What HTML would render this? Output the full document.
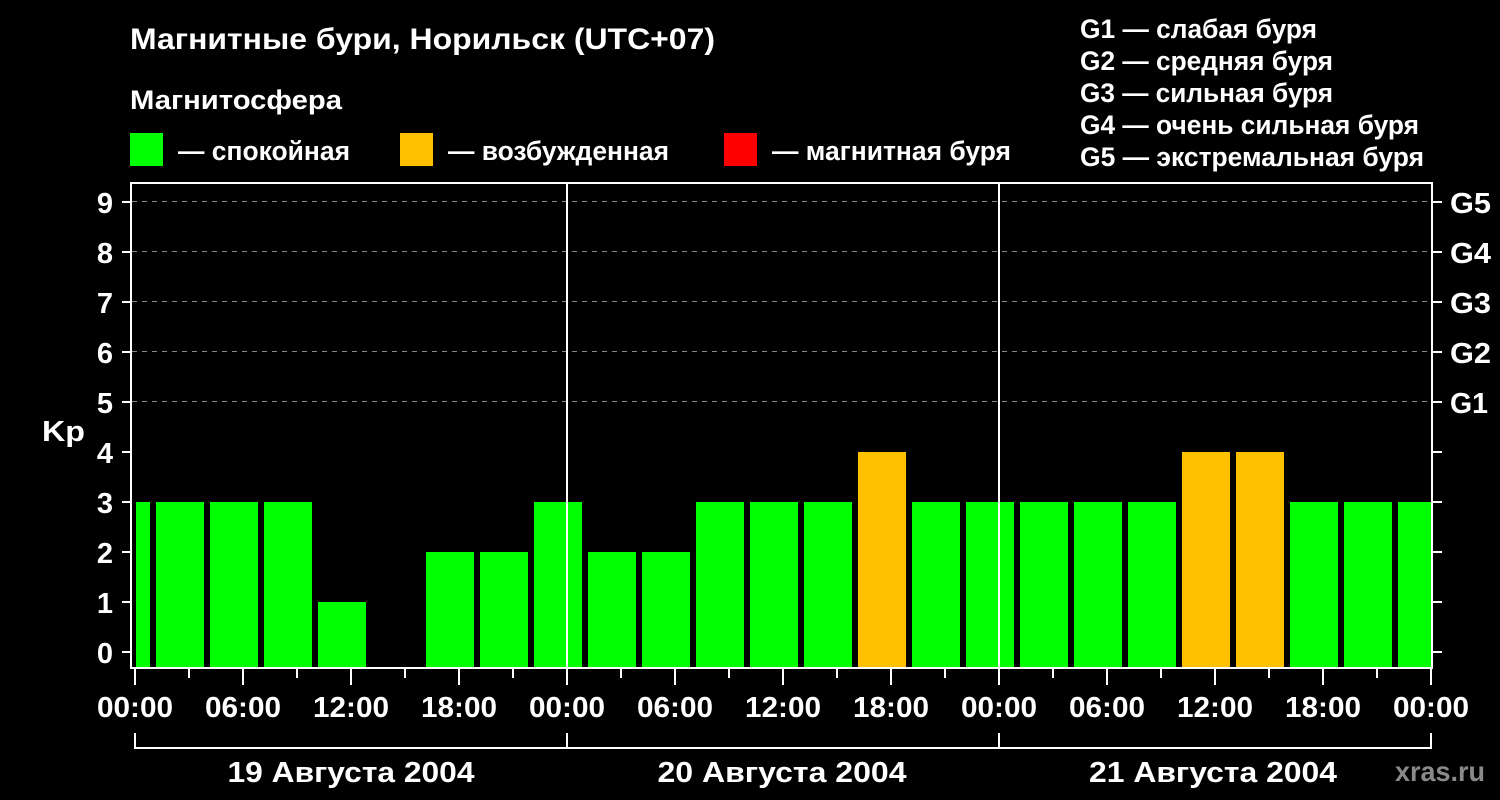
<!DOCTYPE html>
<html><head><meta charset="utf-8"><style>
html,body{margin:0;padding:0;background:#000;}
svg{display:block;}
text{font-family:"Liberation Sans",Arial,sans-serif;font-weight:bold;fill:#fff;}
</style></head><body>
<svg width="1500" height="800" viewBox="0 0 1500 800" xmlns="http://www.w3.org/2000/svg">
<rect width="1500" height="800" fill="#000"/>
<text x="130" y="49" font-size="30" textLength="585" lengthAdjust="spacingAndGlyphs">Магнитные бури, Норильск (UTC+07)</text>
<text x="130" y="109" font-size="27" textLength="212" lengthAdjust="spacingAndGlyphs">Магнитосфера</text>
<rect x="130" y="133" width="33" height="33" fill="#00ff00"/>
<text x="178" y="160" font-size="27" textLength="172" lengthAdjust="spacingAndGlyphs">— спокойная</text>
<rect x="400" y="133" width="33" height="33" fill="#ffc000"/>
<text x="448" y="160" font-size="27" textLength="221" lengthAdjust="spacingAndGlyphs">— возбужденная</text>
<rect x="724" y="133" width="33" height="33" fill="#ff0000"/>
<text x="772" y="160" font-size="27" textLength="239" lengthAdjust="spacingAndGlyphs">— магнитная буря</text>
<g font-size="27">
<text x="1080" y="38" textLength="237" lengthAdjust="spacingAndGlyphs">G1 — слабая буря</text>
<text x="1080" y="70" textLength="253" lengthAdjust="spacingAndGlyphs">G2 — средняя буря</text>
<text x="1080" y="102" textLength="253" lengthAdjust="spacingAndGlyphs">G3 — сильная буря</text>
<text x="1080" y="134" textLength="339" lengthAdjust="spacingAndGlyphs">G4 — очень сильная буря</text>
<text x="1080" y="166" textLength="344" lengthAdjust="spacingAndGlyphs">G5 — экстремальная буря</text>
</g>
<g stroke="#888" stroke-width="1" stroke-dasharray="5,5">
<line x1="132" y1="201.5" x2="1432" y2="201.5"/>
<line x1="132" y1="251.5" x2="1432" y2="251.5"/>
<line x1="132" y1="301.5" x2="1432" y2="301.5"/>
<line x1="132" y1="351.5" x2="1432" y2="351.5"/>
<line x1="132" y1="401.5" x2="1432" y2="401.5"/>
</g>
<g fill="#00ff00">
<rect x="136" y="502" width="14" height="166"/>
<rect x="156" y="502" width="48" height="166"/>
<rect x="210" y="502" width="48" height="166"/>
<rect x="264" y="502" width="48" height="166"/>
<rect x="318" y="602" width="48" height="66"/>
<rect x="426" y="552" width="48" height="116"/>
<rect x="480" y="552" width="48" height="116"/>
<rect x="534" y="502" width="48" height="166"/>
<rect x="588" y="552" width="48" height="116"/>
<rect x="642" y="552" width="48" height="116"/>
<rect x="696" y="502" width="48" height="166"/>
<rect x="750" y="502" width="48" height="166"/>
<rect x="804" y="502" width="48" height="166"/>
<rect x="912" y="502" width="48" height="166"/>
<rect x="966" y="502" width="48" height="166"/>
<rect x="1020" y="502" width="48" height="166"/>
<rect x="1074" y="502" width="48" height="166"/>
<rect x="1128" y="502" width="48" height="166"/>
<rect x="1290" y="502" width="48" height="166"/>
<rect x="1344" y="502" width="48" height="166"/>
<rect x="1398" y="502" width="33" height="166"/>
</g>
<g fill="#ffc000">
<rect x="858" y="452" width="48" height="216"/>
<rect x="1182" y="452" width="48" height="216"/>
<rect x="1236" y="452" width="48" height="216"/>
</g>
<line x1="567" y1="183" x2="567" y2="668" stroke="#fff" stroke-width="2"/>
<line x1="999" y1="183" x2="999" y2="668" stroke="#fff" stroke-width="2"/>
<rect x="131" y="183" width="1301" height="485" fill="none" stroke="#fff" stroke-width="2"/>
<g stroke="#fff" stroke-width="2">
<line x1="122" y1="652" x2="131" y2="652"/><line x1="122" y1="602" x2="131" y2="602"/>
<line x1="122" y1="552" x2="131" y2="552"/><line x1="122" y1="502" x2="131" y2="502"/>
<line x1="122" y1="452" x2="131" y2="452"/><line x1="122" y1="402" x2="131" y2="402"/>
<line x1="122" y1="352" x2="131" y2="352"/><line x1="122" y1="302" x2="131" y2="302"/>
<line x1="122" y1="252" x2="131" y2="252"/><line x1="122" y1="202" x2="131" y2="202"/>
<line x1="1432" y1="652" x2="1442" y2="652"/><line x1="1432" y1="602" x2="1442" y2="602"/>
<line x1="1432" y1="552" x2="1442" y2="552"/><line x1="1432" y1="502" x2="1442" y2="502"/>
<line x1="1432" y1="452" x2="1442" y2="452"/><line x1="1432" y1="402" x2="1442" y2="402"/>
<line x1="1432" y1="352" x2="1442" y2="352"/><line x1="1432" y1="302" x2="1442" y2="302"/>
<line x1="1432" y1="252" x2="1442" y2="252"/><line x1="1432" y1="202" x2="1442" y2="202"/>
</g>
<g font-size="29" text-anchor="middle">
<text x="105" y="663">0</text><text x="105" y="613">1</text><text x="105" y="563">2</text>
<text x="105" y="513">3</text><text x="105" y="463">4</text><text x="105" y="413">5</text>
<text x="105" y="363">6</text><text x="105" y="313">7</text><text x="105" y="263">8</text>
<text x="105" y="213">9</text>
</g>
<text x="42" y="441" font-size="29" textLength="43" lengthAdjust="spacingAndGlyphs">Kp</text>
<g font-size="29">
<text x="1450" y="213" textLength="41" lengthAdjust="spacingAndGlyphs">G5</text><text x="1450" y="263" textLength="41" lengthAdjust="spacingAndGlyphs">G4</text><text x="1450" y="313" textLength="41" lengthAdjust="spacingAndGlyphs">G3</text>
<text x="1450" y="363" textLength="41" lengthAdjust="spacingAndGlyphs">G2</text><text x="1450" y="413" textLength="38" lengthAdjust="spacingAndGlyphs">G1</text>
</g>
<g stroke="#fff" stroke-width="2">
<line x1="135" y1="669" x2="135" y2="685"/><line x1="189" y1="669" x2="189" y2="678"/>
<line x1="243" y1="669" x2="243" y2="685"/><line x1="297" y1="669" x2="297" y2="678"/>
<line x1="351" y1="669" x2="351" y2="685"/><line x1="405" y1="669" x2="405" y2="678"/>
<line x1="459" y1="669" x2="459" y2="685"/><line x1="513" y1="669" x2="513" y2="678"/>
<line x1="567" y1="669" x2="567" y2="685"/><line x1="621" y1="669" x2="621" y2="678"/>
<line x1="675" y1="669" x2="675" y2="685"/><line x1="729" y1="669" x2="729" y2="678"/>
<line x1="783" y1="669" x2="783" y2="685"/><line x1="837" y1="669" x2="837" y2="678"/>
<line x1="891" y1="669" x2="891" y2="685"/><line x1="945" y1="669" x2="945" y2="678"/>
<line x1="999" y1="669" x2="999" y2="685"/><line x1="1053" y1="669" x2="1053" y2="678"/>
<line x1="1107" y1="669" x2="1107" y2="685"/><line x1="1161" y1="669" x2="1161" y2="678"/>
<line x1="1215" y1="669" x2="1215" y2="685"/><line x1="1269" y1="669" x2="1269" y2="678"/>
<line x1="1323" y1="669" x2="1323" y2="685"/><line x1="1377" y1="669" x2="1377" y2="678"/>
<line x1="1431" y1="669" x2="1431" y2="685"/>
</g>
<g font-size="29" text-anchor="middle">
<text x="135" y="717" textLength="76" lengthAdjust="spacingAndGlyphs">00:00</text><text x="243" y="717" textLength="76" lengthAdjust="spacingAndGlyphs">06:00</text><text x="351" y="717" textLength="76" lengthAdjust="spacingAndGlyphs">12:00</text>
<text x="459" y="717" textLength="76" lengthAdjust="spacingAndGlyphs">18:00</text><text x="567" y="717" textLength="76" lengthAdjust="spacingAndGlyphs">00:00</text><text x="675" y="717" textLength="76" lengthAdjust="spacingAndGlyphs">06:00</text>
<text x="783" y="717" textLength="76" lengthAdjust="spacingAndGlyphs">12:00</text><text x="891" y="717" textLength="76" lengthAdjust="spacingAndGlyphs">18:00</text><text x="999" y="717" textLength="76" lengthAdjust="spacingAndGlyphs">00:00</text>
<text x="1107" y="717" textLength="76" lengthAdjust="spacingAndGlyphs">06:00</text><text x="1215" y="717" textLength="76" lengthAdjust="spacingAndGlyphs">12:00</text><text x="1323" y="717" textLength="76" lengthAdjust="spacingAndGlyphs">18:00</text>
<text x="1431" y="717" textLength="76" lengthAdjust="spacingAndGlyphs">00:00</text>
</g>
<g stroke="#fff" stroke-width="2" fill="none">
<line x1="135" y1="748" x2="1431" y2="748"/>
<line x1="135" y1="733" x2="135" y2="749"/><line x1="567" y1="733" x2="567" y2="749"/>
<line x1="999" y1="733" x2="999" y2="749"/><line x1="1431" y1="733" x2="1431" y2="749"/>
</g>
<g font-size="29" text-anchor="middle">
<text x="351" y="782" textLength="247" lengthAdjust="spacingAndGlyphs">19 Августа 2004</text>
<text x="782" y="782" textLength="249" lengthAdjust="spacingAndGlyphs">20 Августа 2004</text>
<text x="1213" y="782" textLength="248" lengthAdjust="spacingAndGlyphs">21 Августа 2004</text>
</g>
<text x="1440" y="781" font-size="28" text-anchor="middle" style="fill:#8a8a8a" textLength="90" lengthAdjust="spacingAndGlyphs">xras.ru</text>
</svg>
</body></html>
